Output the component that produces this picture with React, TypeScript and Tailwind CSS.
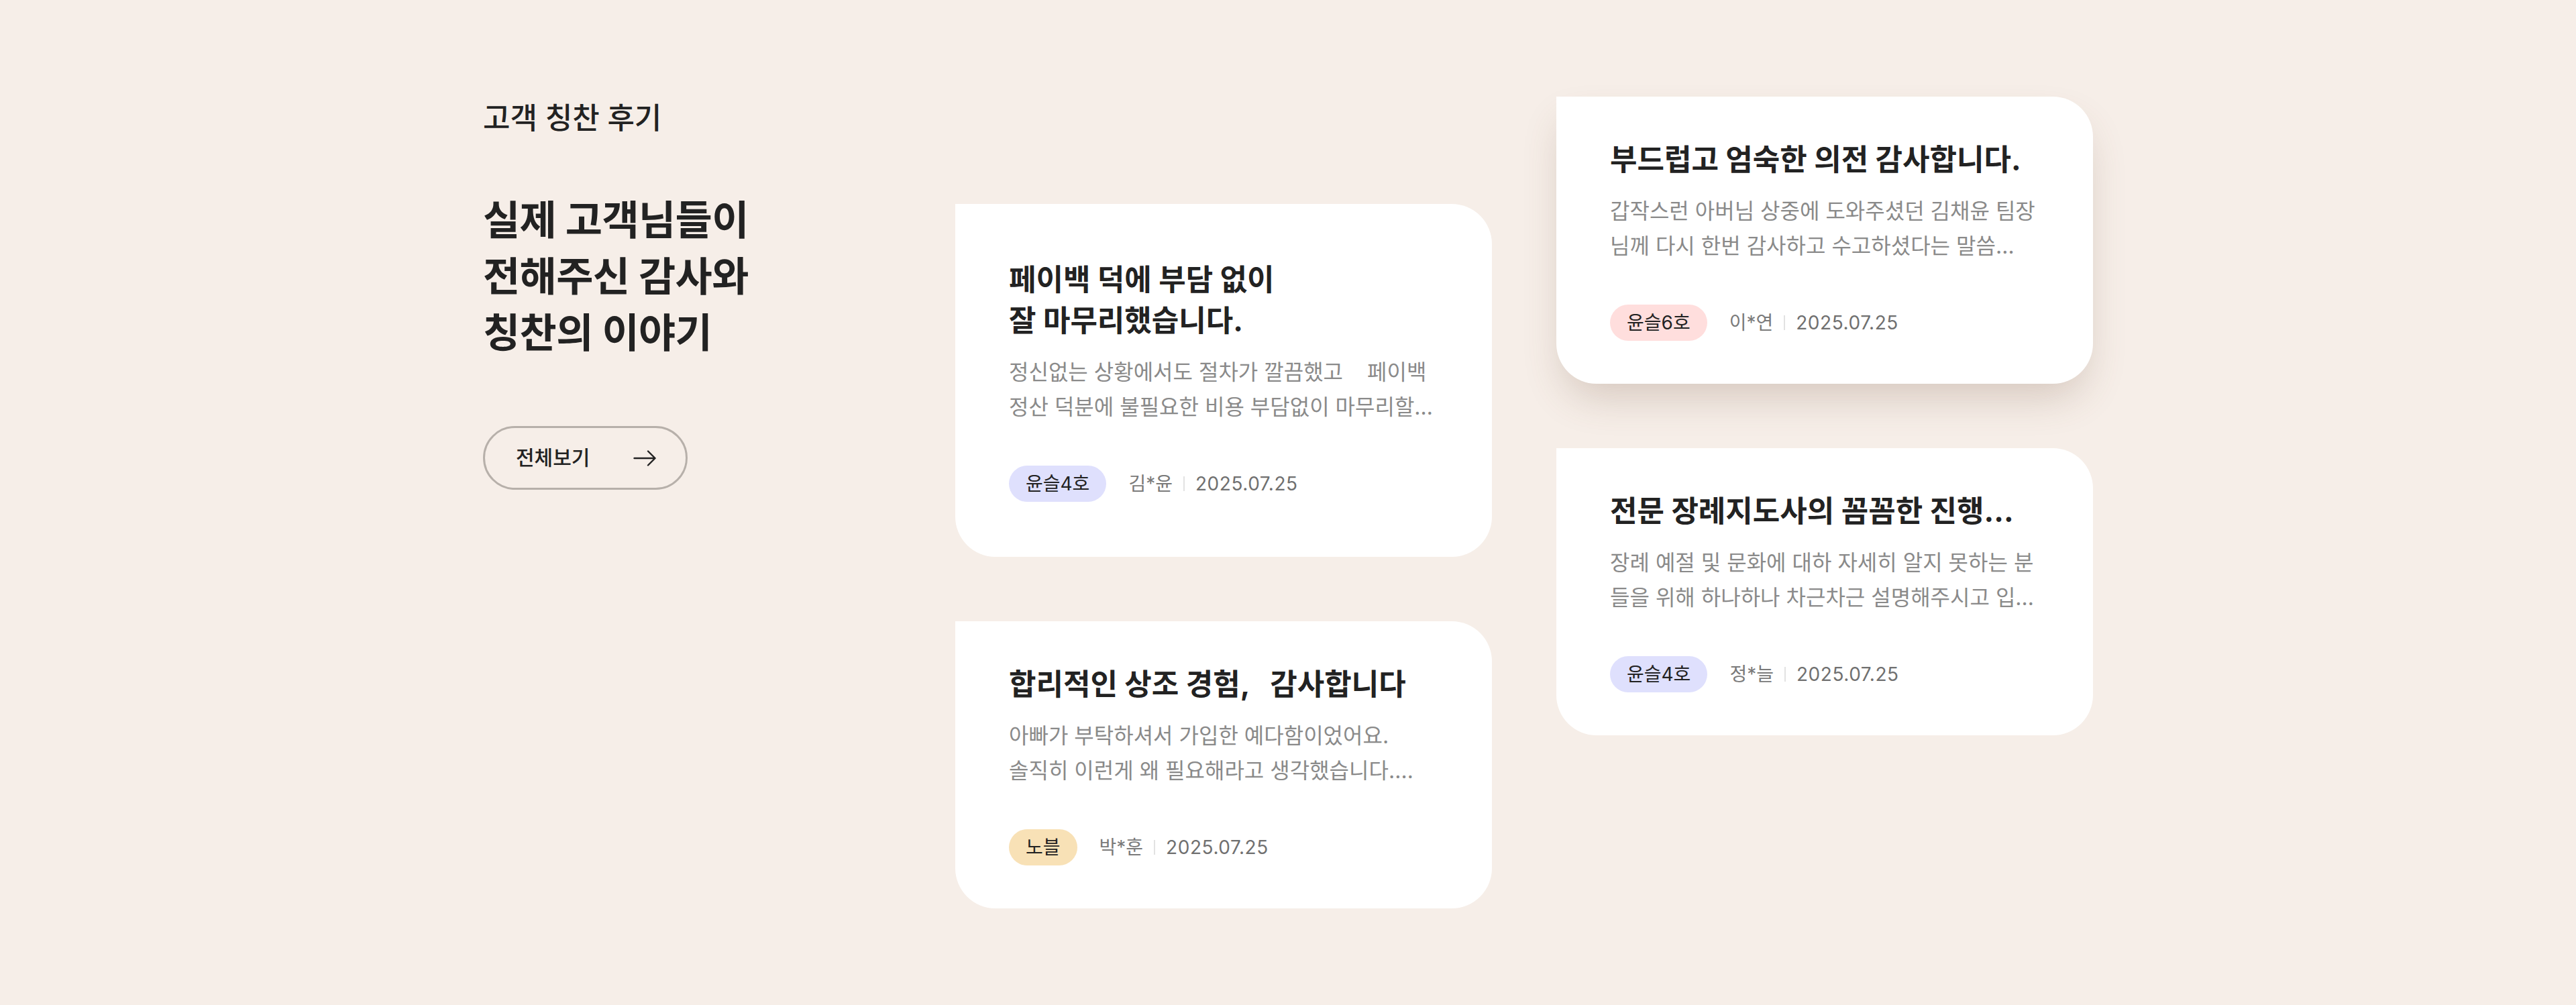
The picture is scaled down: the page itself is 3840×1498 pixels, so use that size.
import React from 'react'

type Review = {
  title: string
  body: string
  badge: string
  badgeColor: string
  name: string
  date: string
}

const leftReviews: Review[] = [
  {
    title: '페이백 덕에 부담 없이\n잘 마무리했습니다.',
    body: '정신없는 상황에서도 절차가 깔끔했고    페이백 정산 덕분에 불필요한 비용 부담없이 마무리할…',
    badge: '윤슬4호',
    badgeColor: 'bg-[#dfe0fd]',
    name: '김*윤',
    date: '2025.07.25',
  },
  {
    title: '합리적인 상조 경험,   감사합니다',
    body: '아빠가 부탁하셔서 가입한 예다함이었어요.\n솔직히 이런게 왜 필요해라고 생각했습니다.…',
    badge: '노블',
    badgeColor: 'bg-[#f8e1b6]',
    name: '박*훈',
    date: '2025.07.25',
  },
]

const rightReviews: Review[] = [
  {
    title: '부드럽고 엄숙한 의전 감사합니다.',
    body: '갑작스런 아버님 상중에 도와주셨던 김채윤 팀장님께 다시 한번 감사하고 수고하셨다는 말씀…',
    badge: '윤슬6호',
    badgeColor: 'bg-[#ffdedd]',
    name: '이*연',
    date: '2025.07.25',
  },
  {
    title: '전문 장례지도사의 꼼꼼한 진행...',
    body: '장례 예절 및 문화에 대하 자세히 알지 못하는 분들을 위해 하나하나 차근차근 설명해주시고 입…',
    badge: '윤슬4호',
    badgeColor: 'bg-[#dfe0fd]',
    name: '정*늘',
    date: '2025.07.25',
  },
]

function ReviewCard({ review, className = '' }: { review: Review; className?: string }) {
  return (
    <article
      className={`flex flex-col justify-center rounded-r-[60px] rounded-bl-[60px] bg-white px-[80px] py-[64px] ${className}`}
    >
      <h3 className="whitespace-pre-wrap text-[44px] font-bold leading-[61px] text-[#222222]">{review.title}</h3>
      <p className="mt-[20px] line-clamp-2 whitespace-pre-wrap text-[32px] leading-[52px] text-[#8a8a8a]">
        {review.body}
      </p>
      <div className="mt-[61px] flex items-center">
        <span
          className={`flex h-[54px] items-center rounded-full px-[25px] text-[28px] text-[#222222] ${review.badgeColor}`}
        >
          {review.badge}
        </span>
        <span className="ml-[33px] text-[28px] text-[#7a7a7a]">{review.name}</span>
        <span className="mx-[16px] h-[22px] w-[2px] bg-[#e2e2e2]" />
        <span className="text-[28px] tracking-[0.02em] text-[#707070]">{review.date}</span>
      </div>
    </article>
  )
}

export default function App() {
  return (
    <div className="min-h-screen bg-[#f6eee8] font-[Inter,'Noto_Sans_CJK_KR',sans-serif]">
      <section className="mx-auto flex w-[2400px] py-[144px]">
        {/* intro */}
        <div className="w-[704px] shrink-0">
          <p className="text-[44px] font-medium leading-[64px] text-[#222222]">고객 칭찬 후기</p>
          <h2 className="mt-[78px] text-[60px] font-bold leading-[84px] tracking-[-0.01em] text-[#222222]">
            실제 고객님들이
            <br />
            전해주신 감사와
            <br />
            칭찬의 이야기
          </h2>
          <button className="mt-[97px] flex h-[95px] items-center gap-[65px] rounded-full border-[3px] border-[#b7b0aa] pl-[46px] pr-[44px] text-[30px] font-medium text-[#222222]">
            전체보기
            <svg width="34" height="24" viewBox="0 0 34 24" fill="none" stroke="#222222" strokeWidth="2.4" strokeLinecap="round" strokeLinejoin="round">
              <path d="M1.5 12h31M22 1.5 32.5 12 22 22.5" />
            </svg>
          </button>
        </div>

        {/* cards */}
        <div className="flex gap-[96px]">
          <div className="mt-[160px] flex w-[800px] flex-col gap-[96px]">
            <ReviewCard review={leftReviews[0]} className="h-[526px]" />
            <ReviewCard review={leftReviews[1]} />
          </div>
          <div className="flex w-[800px] flex-col gap-[96px]">
            <ReviewCard review={rightReviews[0]} className="shadow-[0_30px_60px_-12px_rgba(110,75,55,0.24)]" />
            <ReviewCard review={rightReviews[1]} />
          </div>
        </div>
      </section>
    </div>
  )
}
